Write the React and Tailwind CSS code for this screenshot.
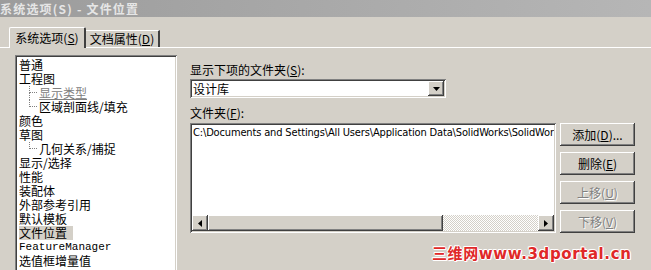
import React from 'react';

const sunken =
  'shadow-[inset_1px_1px_0_#808080,inset_-1px_-1px_0_#ffffff,inset_2px_2px_0_#404040,inset_-2px_-2px_0_#d4d0c8]';
const raised =
  'shadow-[inset_-1px_-1px_0_#404040,inset_1px_1px_0_#ffffff,inset_-2px_-2px_0_#808080,inset_2px_2px_0_#d4d0c8]';

const tree = [
  { t: '普通' },
  { t: '工程图' },
  { t: '显示类型', child: true, link: true },
  { t: '区域剖面线/填充', child: true, last: true },
  { t: '颜色' },
  { t: '草图' },
  { t: '几何关系/捕捉', child: true, last: true },
  { t: '显示/选择' },
  { t: '性能' },
  { t: '装配体' },
  { t: '外部参考引用' },
  { t: '默认模板' },
  { t: '文件位置', selected: true },
  { t: 'FeatureManager', mono: true },
  { t: '选值框增量值' },
];

function Btn({ label, hot, tail = '', disabled }) {
  return (
    <div
      className={`h-[23px] w-[75px] flex items-center justify-center ${raised} ${
        disabled ? 'text-[#808080] [text-shadow:1px_1px_0_#ffffff]' : 'text-black'
      }`}
    >
      <span>
        {label}(<span className="underline">{hot}</span>){tail}
      </span>
    </div>
  );
}

function TreeRow({ item }) {
  let textCls = 'text-black';
  if (item.link) textCls = 'text-[#808080] underline';
  return (
    <div className="h-[14px] flex items-center">
      {item.child && (
        <span className="ml-[10px] w-[8px] h-[14px] flex flex-col shrink-0">
          <span className="h-[7px] border-l border-b border-dotted border-[#808080]" />
          <span className={`h-[7px] ${item.last ? '' : 'border-l border-dotted border-[#808080]'}`} />
        </span>
      )}
      <span
        className={`leading-[14px] ${item.child ? 'ml-[2px]' : ''} ${
          item.selected ? 'bg-[#d4d0c8] pr-[6px]' : ''
        } ${item.mono ? "font-['Liberation_Mono',monospace] text-[11px]" : ''} ${textCls}`}
      >
        {item.t}
      </span>
    </div>
  );
}

export default function App() {
  return (
    <div className="relative w-[651px] h-[270px] overflow-hidden bg-[#d4d0c8] text-[12px] font-['Noto_Sans_CJK_SC','Liberation_Sans',sans-serif]">
      {/* title bar */}
      <div className="h-[17px] bg-gradient-to-r from-[#9c9c9c] to-[#b6b6b6] text-[#e6e6e6] font-bold leading-[17px] whitespace-nowrap tracking-[1.2px]">
        系统选项(S) - 文件位置
      </div>

      {/* tabs */}
      <div className="h-[31px] flex items-end pl-[9px] border-b border-white">
        <div className="h-[21px] w-[77px] bg-[#d4d0c8] border-t border-l border-white border-r-2 border-r-[#404040] rounded-t-[2px] flex items-center justify-center -mb-[1px] relative z-10">
          <span>
            系统选项(<span className="underline">S</span>)
          </span>
        </div>
        <div className="h-[17px] w-[74px] border-t border-white border-r-2 border-r-[#404040] flex items-center justify-center">
          <span>
            文档属性(<span className="underline">D</span>)
          </span>
        </div>
      </div>

      <div className="flex pl-[15px] pt-[7px]">
        {/* tree */}
        <div className={`w-[162px] h-[230px] bg-white pl-[4px] pt-[3px] ${sunken}`}>
          {tree.map((item) => (
            <TreeRow key={item.t} item={item} />
          ))}
        </div>

        {/* right side */}
        <div className="ml-[13px] pt-[7px] flex flex-col">
          <div className="h-[16px] leading-[16px]">
            显示下项的文件夹(<span className="underline">S</span>):
          </div>
          <div className={`mt-[1px] w-[256px] h-[19px] bg-white flex items-center justify-between pl-[3px] pr-[2px] ${sunken}`}>
            <span className="leading-[14px]">设计库</span>
            <span className={`w-[16px] h-[15px] bg-[#d4d0c8] flex items-center justify-center ${raised}`}>
              <svg width="7" height="4" viewBox="0 0 7 4">
                <path d="M0 0h7L3.5 4z" fill="#000" />
              </svg>
            </span>
          </div>
          <div className="mt-[7px] h-[18px] leading-[16px]">
            文件夹(<span className="underline">F</span>):
          </div>

          <div className="flex gap-[4px]">
            <div className={`w-[366px] h-[110px] bg-white p-[2px] flex flex-col ${sunken}`}>
              <div className="flex-1 overflow-hidden whitespace-nowrap pl-[1px] pt-[1px] text-[11px] leading-[14px] font-['DejaVu_Sans_Condensed','Liberation_Sans',sans-serif] tracking-[-0.15px]">
                C:\Documents and Settings\All Users\Application Data\SolidWorks\SolidWor
              </div>
              <div className="h-[16px] flex">
                <span className={`w-[16px] h-[16px] bg-[#d4d0c8] flex items-center justify-center ${raised}`}>
                  <svg width="4" height="7" viewBox="0 0 4 7">
                    <path d="M4 0v7L0 3.5z" fill="#000" />
                  </svg>
                </span>
                <span className={`w-[235px] h-[16px] bg-[#d4d0c8] ${raised}`} />
                <span className="flex-1 h-[16px] bg-[repeating-conic-gradient(#ffffff_0_25%,#d4d0c8_0_50%)] bg-[length:2px_2px]" />
                <span className={`w-[16px] h-[16px] bg-[#d4d0c8] flex items-center justify-center ${raised}`}>
                  <svg width="4" height="7" viewBox="0 0 4 7">
                    <path d="M0 0v7L4 3.5z" fill="#000" />
                  </svg>
                </span>
              </div>
            </div>

            <div className="flex flex-col gap-[6px]">
              <Btn label="添加" hot="D" tail="..." />
              <Btn label="删除" hot="E" />
              <Btn label="上移" hot="U" disabled />
              <Btn label="下移" hot="V" disabled />
            </div>
          </div>
        </div>
      </div>

      {/* watermark */}
      <div className="absolute left-[432px] top-[246px] text-[15px] leading-[17px] font-bold text-[#e02828] whitespace-nowrap tracking-[0.6px] font-['DejaVu_Sans','Noto_Sans_CJK_SC',sans-serif] [text-shadow:1px_0_0_#fff,-1px_0_0_#fff,0_1px_0_#fff,0_-1px_0_#fff,1px_1px_0_#fff,-1px_-1px_0_#fff]">
        三维网www.3dportal.cn
      </div>
    </div>
  );
}
